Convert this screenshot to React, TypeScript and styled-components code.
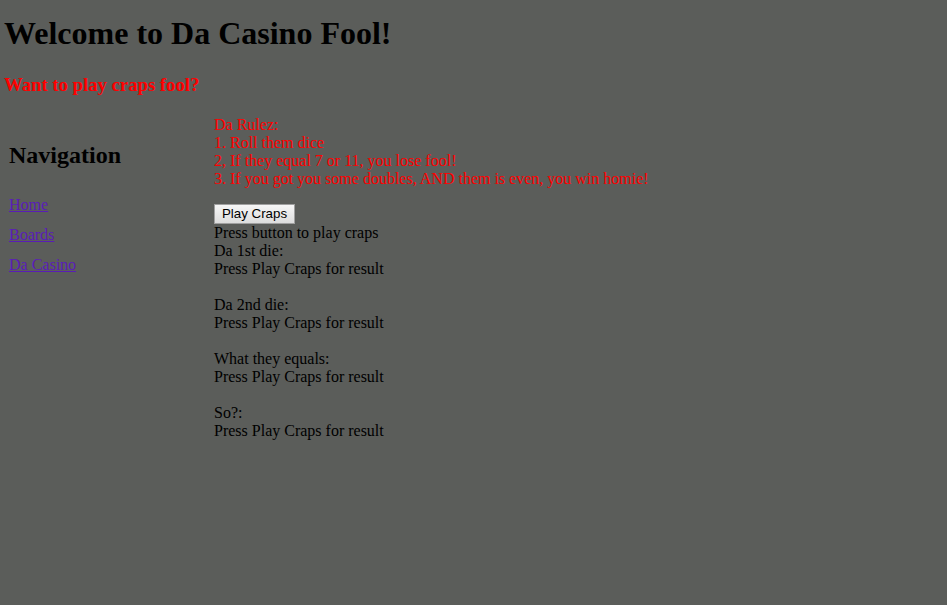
import React from "react";
import styled, { createGlobalStyle } from "styled-components";

const Global = createGlobalStyle`
  html, body { margin: 0; padding: 0; background: #5b5d5a; }
  body { font-family: "Liberation Serif", "Times New Roman", serif; font-size: 16px; color: #000; }
`;

const Page = styled.div`
  padding: 0 4px;
  min-height: 605px;
  box-sizing: border-box;
`;

const Title = styled.h1`
  font-size: 32px;
  font-weight: bold;
  margin: 15px 0 0;
  line-height: 37px;
  color: #000;
`;

const Subtitle = styled.h3`
  font-size: 18.72px;
  font-weight: bold;
  color: #ff0000;
  margin: 22px 0 0;
  line-height: 22px;
`;

const Layout = styled.div`
  display: flex;
  align-items: flex-start;
  margin-top: 20px;
`;

const Sidebar = styled.nav`
  width: 210px;
  padding-left: 5px;
  box-sizing: border-box;
`;

const NavTitle = styled.h2`
  font-size: 24px;
  font-weight: bold;
  margin: 25px 0 0;
  line-height: 28px;
`;

const NavList = styled.div`
  display: flex;
  flex-direction: column;
  gap: 12px;
  margin-top: 27px;
`;

const NavLink = styled.a`
  color: #5a1cb8;
  text-decoration: underline;
  line-height: 18px;
`;

const Main = styled.div`
  display: flex;
  flex-direction: column;
  line-height: 18px;
`;

const Rules = styled.div`
  color: #ff0000;
`;

const Line = styled.div<{ $gapBefore?: boolean }>`
  margin-top: ${(p) => (p.$gapBefore ? "18px" : "0")};
`;

const Button = styled.button`
  align-self: flex-start;
  font-family: "Liberation Sans", Arial, sans-serif;
  font-size: 13.33px;
  color: #000;
  height: 20px;
  width: 81px;
  padding: 0 6px;
  margin-top: 16px;
  background: linear-gradient(#f6f6f6, #dddddd);
  border: 1px solid #a0a0a0;
  border-radius: 0;
  line-height: 16px;
`;

const results = ["Da 1st die:", "Da 2nd die:", "What they equals:", "So?:"];

export default function App() {
  return (
    <Page>
      <Global />
      <Title>Welcome to Da Casino Fool!</Title>
      <Subtitle>Want to play craps fool?</Subtitle>
      <Layout>
        <Sidebar>
          <NavTitle>Navigation</NavTitle>
          <NavList>
            <NavLink href="#">Home</NavLink>
            <NavLink href="#">Boards</NavLink>
            <NavLink href="#">Da Casino</NavLink>
          </NavList>
        </Sidebar>
        <Main>
          <Rules>
            <Line>Da Rulez:</Line>
            <Line>1. Roll them dice</Line>
            <Line>2, If they equal 7 or 11, you lose fool!</Line>
            <Line>3. If you got you some doubles, AND them is even, you win homie!</Line>
          </Rules>
          <Button>Play Craps</Button>
          <Line>Press button to play craps</Line>
          {results.map((label, i) => (
            <React.Fragment key={label}>
              <Line $gapBefore={i > 0}>{label}</Line>
              <Line>Press Play Craps for result</Line>
            </React.Fragment>
          ))}
        </Main>
      </Layout>
    </Page>
  );
}
